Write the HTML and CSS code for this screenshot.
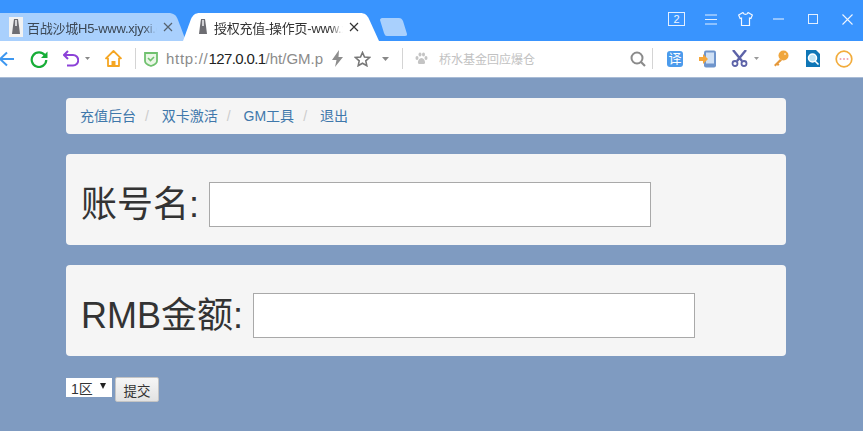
FILE: index.html
```html
<!DOCTYPE html>
<html lang="zh">
<head>
<meta charset="utf-8">
<title>授权充值-操作页</title>
<link rel="stylesheet" href="styles.css">
</head>
<body>
<header class="chrome">
  <div class="titlebar">
    <div class="tabs">
      <div class="tab tab-back">
        <svg class="tab-bg" width="186" height="28" viewBox="0 0 186 28"><path d="M0 0H168C174 0 176 2 178 7L186 28H0Z" fill="#a9d0fd"/></svg>
        <svg class="favicon" width="14" height="20" viewBox="0 0 14 20"><rect width="14" height="20" fill="#f2f2f2"/><path d="M5 2h4l1 7 1 8H3l1-8Z" fill="#6d6d72"/><path d="M6 3h2v6H6Z" fill="#d5d5d8"/></svg>
        <span class="tab-title">百战沙城H5-www.xjyxi.c</span>
        <svg class="tab-x" width="10" height="10" viewBox="0 0 10 10"><path d="M1 1l8 8M9 1l-8 8" stroke="#56636f" stroke-width="1.2"/></svg>
      </div>
      <div class="tab tab-front">
        <svg class="tab-bg" width="196" height="28" viewBox="0 0 196 28"><path d="M0 28L8 6C10 2 12 0 17 0H177C182 0 184 2 186 6L196 28Z" fill="#fff"/></svg>
        <svg class="favicon" width="14" height="20" viewBox="0 0 14 20"><path d="M5 2h4l1 7 1 8H3l1-8Z" fill="#6d6d72"/><path d="M6 3h2v6H6Z" fill="#cfcfd2"/></svg>
        <span class="tab-title">授权充值-操作页-www.x</span>
        <svg class="tab-x" width="10" height="10" viewBox="0 0 10 10"><path d="M1 1l8 8M9 1l-8 8" stroke="#333" stroke-width="1.2"/></svg>
      </div>
      <svg class="newtab" width="28" height="18" viewBox="0 0 28 18"><path d="M2 0H19C21 0 22 1 23 3L27 16C27 17 27 18 25 18H7C5 18 5 17 4 15L0 2C0 1 1 0 2 0Z" fill="#a9d0fd"/></svg>
    </div>
    <div class="winctl">
      <svg width="17" height="14" viewBox="0 0 17 14"><rect x=".5" y=".5" width="16" height="13" fill="none" stroke="#e3efff"/><text x="8.5" y="11" text-anchor="middle" class="count">2</text></svg>
      <svg class="ml-20" width="12" height="11" viewBox="0 0 12 11"><path d="M0 1h12M0 5.500h12M0 10h12" stroke="#e3efff"/></svg>
      <svg class="ml-21" width="15" height="14" viewBox="0 0 15 14"><path d="M5 .5L.6 3l1.500 3.500L3.500 6v7.500h8V6l1.400.5L14.400 3 10 .5C9.500 3 5.500 3 5 .5Z" fill="none" stroke="#f4f8ff" stroke-width="1.200"/></svg>
      <svg class="ml-20" width="11" height="2" viewBox="0 0 11 2"><path d="M0 1h11" stroke="#eef5ff"/></svg>
      <svg class="ml-24" width="10" height="10" viewBox="0 0 10 10"><rect x=".5" y=".5" width="9" height="9" fill="none" stroke="#e3efff"/></svg>
      <svg class="ml-24" width="11" height="11" viewBox="0 0 11 11"><path d="M.5.500l10 10M10.500.500l-10 10" stroke="#eef5ff" stroke-width="1.100"/></svg>
    </div>
  </div>
  <div class="toolbar">
    <svg class="tool-back" width="16" height="16" viewBox="0 0 16 16"><path d="M15 8H1M8 1.500L1 8l7 6.500" fill="none" stroke="#3d97f0" stroke-width="2"/></svg>
    <svg class="ml-15" width="18" height="18" viewBox="0 0 18 18"><path d="M15 5.500A7.300 7.300 0 1 0 16.300 10" fill="none" stroke="#17ad37" stroke-width="2.200"/><path d="M17.500 1.500V8H11Z" fill="#17ad37"/></svg>
    <svg class="ml-15" width="16" height="17" viewBox="0 0 16 17"><path d="M1 5h9a4.800 4.800 0 0 1 0 10.500H4" fill="none" stroke="#8c42d8" stroke-width="2"/><path d="M5 1L1 5l4 4" fill="none" stroke="#8c42d8" stroke-width="2"/></svg>
    <svg class="ml-6" width="5" height="3" viewBox="0 0 5 3"><path d="M0 0h5L2.500 3Z" fill="#888"/></svg>
    <svg class="ml-15" width="17" height="17" viewBox="0 0 17 17"><path d="M8.500 1L1 8.300h2V16h11V8.300h2Z" fill="none" stroke="#f5a623" stroke-width="1.800" stroke-linejoin="round"/><path d="M6.500 16v-5h4v5" fill="#f5a623"/></svg>
    <span class="vsep sep-a"></span>
    <svg class="shield" width="14" height="16" viewBox="0 0 14 16"><path d="M1 2h12v8c0 2.500-3 4-6 5-3-1-6-2.500-6-5Z" fill="#eaf7e6" stroke="#70c16f" stroke-width="1.800"/><path d="M4 7l2.500 2.500L10 6" fill="none" stroke="#70c16f" stroke-width="1.600"/></svg>
    <span class="url"><span class="url-dim url-scheme">http://</span><span class="url-host">127.0.0.1</span><span class="url-dim">/ht/GM.p</span></span>
    <svg class="bolt" width="13" height="17" viewBox="0 0 13 17"><path d="M8 0L1 10h4.500L4 17l8-10H7.500Z" fill="#8d8d8d"/></svg>
    <svg class="ml-10" width="17" height="16" viewBox="0 0 17 16"><path d="M8.500 1.500l2 4.500 5 .5-3.700 3.300 1 4.900-4.300-2.500-4.300 2.500 1-4.900L1.500 6.500l5-.5Z" fill="none" stroke="#777" stroke-width="1.600"/></svg>
    <svg class="ml-11" width="7" height="4" viewBox="0 0 7 4"><path d="M0 0h7L3.500 4Z" fill="#888"/></svg>
    <span class="vsep sep-b"></span>
    <svg class="paw" width="13" height="13" viewBox="0 0 13 13"><g fill="#c4c4c4"><ellipse cx="2" cy="6" rx="1.500" ry="2"/><ellipse cx="5" cy="2.500" rx="1.500" ry="2"/><ellipse cx="8.500" cy="2.500" rx="1.500" ry="2"/><ellipse cx="11" cy="6" rx="1.500" ry="2"/><path d="M6.500 6c2 0 4 3 3.500 5-.5 1.500-2.500 1-3.500 1s-3 .5-3.500-1C2.500 9 4.500 6 6.500 6Z"/></g></svg>
    <span class="search-hint">桥水基金回应爆仓</span>
    <svg class="search" width="16" height="16" viewBox="0 0 16 16"><circle cx="7" cy="7" r="5.500" fill="none" stroke="#8a8a8a" stroke-width="2"/><path d="M11 11l4 4" stroke="#8a8a8a" stroke-width="2.200"/></svg>
    <span class="vsep sep-c"></span>
    <span class="ico-translate">译</span>
    <svg class="ml-16" width="17" height="18" viewBox="0 0 17 18"><rect x="5" y="0.500" width="12" height="17" rx="2" fill="#6f95cc"/><rect x="7" y="2.500" width="8" height="11" fill="#cfe0f5"/><path d="M0 7h4V4l5 5-5 5v-3H0Z" fill="#f5a63a"/></svg>
    <svg class="ml-15" width="17" height="17" viewBox="0 0 17 17"><path d="M2 0l9 11M15 0L6 11" stroke="#5d63a8" stroke-width="2.400"/><circle cx="4" cy="13.500" r="2.500" fill="none" stroke="#5d63a8" stroke-width="1.800"/><circle cx="13" cy="13.500" r="2.500" fill="none" stroke="#5d63a8" stroke-width="1.800"/></svg>
    <svg class="ml-6" width="5" height="3" viewBox="0 0 5 3"><path d="M0 0h5L2.500 3Z" fill="#999"/></svg>
    <svg class="ml-14" width="16" height="17" viewBox="0 0 16 17"><circle cx="10.500" cy="5.500" r="5" fill="#f0a63c"/><path d="M7 9L1 15l1.500 1.500L4 15l1 1 1.500-1.500L5.500 13.500 9 10.500Z" fill="#e5983a"/><circle cx="12" cy="4" r="1" fill="#fbe2b8"/></svg>
    <svg class="ml-16" width="15" height="17" viewBox="0 0 15 17"><path d="M1 0h10l4 4v13H1Z" fill="#0f76b6"/><circle cx="7.500" cy="8" r="4" fill="#bfe4f5" stroke="#fff" stroke-width="1.500"/><path d="M10 11l3.500 3.500" stroke="#fff" stroke-width="1.600"/></svg>
    <svg class="ml-15" width="18" height="18" viewBox="0 0 18 18"><circle cx="9" cy="9" r="7.800" fill="#fff" stroke="#f2ac3c" stroke-width="1.700"/><g fill="#f0a0b0"><circle cx="5.500" cy="9" r="1"/><circle cx="9" cy="9" r="1"/><circle cx="12.500" cy="9" r="1"/></g></svg>
  </div>
</header>
<main class="page">
  <nav class="crumbs">
    <a href="#">充值后台</a><span class="slash">/</span>
    <a href="#">双卡激活</a><span class="slash">/</span>
    <a href="#">GM工具</a><span class="slash">/</span>
    <a href="#">退出</a>
  </nav>
  <div class="well">
    <label class="field-label" for="account">账号名:</label>
    <input class="field-input" id="account" type="text">
  </div>
  <div class="well">
    <label class="field-label" for="amount">RMB金额:</label>
    <input class="field-input" id="amount" type="text">
  </div>
  <div class="actions">
    <span class="zone"><span class="zone-text">1区</span><span class="zone-arrow"></span></span>
    <button class="submit" type="button">提交</button>
  </div>
</main>
</body>
</html>
```

FILE: styles.css
```css
* { box-sizing: border-box; }
html, body { margin: 0; padding: 0; height: 100%; overflow: hidden; }
body {
  background: #7f9bc1;
  font-family: "Liberation Sans", "Noto Sans CJK SC", sans-serif;
  color: #333;
}
svg { display: block; flex: none; }

.chrome { height: 78px; }
.titlebar {
  height: 41px;
  background: #3994fe;
  display: flex;
  justify-content: space-between;
  align-items: flex-start;
}
.tabs { display: flex; align-items: flex-start; padding-top: 13px; height: 41px; }
.tab {
  position: relative;
  height: 28px;
  display: flex;
  align-items: center;
  font-size: 13px;
}
.tab-bg { position: absolute; left: 0; top: 0; }
.tab-back { width: 183px; padding-left: 9px; color: #3b4754; }
.tab-front { width: 196px; padding-left: 13px; color: #333; }
.tab .favicon, .tab .tab-title, .tab .tab-x { position: relative; }
.tab-title {
  display: block;
  overflow: hidden;
  white-space: nowrap;
  margin-left: 4px;
  width: 130px;
  letter-spacing: -0.25px;
  -webkit-mask-image: linear-gradient(90deg, #000 90%, transparent);
  mask-image: linear-gradient(90deg, #000 90%, transparent);
}
.tab-x { margin-left: 6px; }
.tab-front .tab-title { width: 129px; }
.newtab { margin: 5px 0 0 1px; }

.winctl {
  display: flex;
  align-items: center;
  height: 38px;
  padding-right: 10px;
}
.count { font: 11px "Liberation Sans", sans-serif; fill: #eef5ff; }
.ml-6 { margin-left: 6px; }
.ml-10 { margin-left: 10px; }
.ml-11 { margin-left: 11px; }
.ml-14 { margin-left: 14px; }
.ml-15 { margin-left: 15px; }
.ml-16 { margin-left: 16px; }
.ml-20 { margin-left: 20px; }
.ml-21 { margin-left: 21px; }
.ml-24 { margin-left: 24px; }

.toolbar {
  height: 37px;
  background: #fff;
  border-bottom: 1px solid #a9bcd6;
  display: flex;
  align-items: center;
  padding-bottom: 1px;
}
.tool-back { margin-left: -1px; }
.vsep { width: 1px; height: 21px; background: #d4d4d4; flex: none; }
.sep-a { margin-left: 13px; }
.sep-b { margin-left: 13px; }
.sep-c { margin-left: 6px; }
.shield { margin-left: 8px; }
.url {
  margin-left: 8px;
  width: 161px;
  overflow: hidden;
  white-space: nowrap;
  font-size: 15px;
  color: #222;
}
.url-dim { color: #8b8b8b; }
.url-scheme { letter-spacing: 0.7px; }
.url-host { letter-spacing: -0.6px; }
.bolt { margin-left: 4px; }
.paw { margin-left: 12px; }
.search-hint {
  margin-left: 11px;
  width: 100px;
  font-size: 12px;
  color: #c2c2c2;
  white-space: nowrap;
}
.search { margin-left: 91px; }
.ico-translate {
  margin-left: 14px;
  width: 16px;
  height: 16px;
  border-radius: 3px;
  background: #4b9bec;
  color: #fff;
  font-size: 13px;
  line-height: 16px;
  text-align: center;
  flex: none;
}

.page { width: 720px; margin-left: 66px; padding-top: 20px; }
.crumbs {
  height: 36px;
  background: #f5f5f5;
  border-radius: 4px;
  padding: 0 14px;
  margin-bottom: 20px;
  font-size: 14px;
  line-height: 36px;
  white-space: nowrap;
}
.crumbs a { color: #3f78ab; text-decoration: none; }
.slash { color: #ccc; padding: 0 9px 0 9px; }
.well {
  height: 91px;
  background: #f5f5f5;
  border-radius: 4px;
  padding: 28px 15px 0;
  margin-bottom: 20px;
  display: flex;
  align-items: flex-start;
}
.field-label {
  font-size: 36px;
  line-height: 45px;
  height: 45px;
  color: #333;
  white-space: nowrap;
  margin-right: 10px;
}
.field-input {
  width: 442px;
  height: 45px;
  background: #fff;
  border: 1px solid #a9a9a9;
  padding: 0;
  margin: 0;
  display: block;
}
.actions { display: flex; align-items: flex-start; margin-top: 21px; }
.zone {
  width: 46px;
  height: 19px;
  margin-top: 1px;
  background: #fff;
  display: flex;
  align-items: center;
  font-size: 14px;
  color: #333;
  padding-left: 5px;
  position: relative;
}
.zone-arrow {
  position: absolute;
  right: 6px;
  top: 5px;
  border-left: 3.500px solid transparent;
  border-right: 3.500px solid transparent;
  border-top: 6px solid #222;
}
.submit {
  margin: 0 0 0 3px;
  width: 44px;
  height: 25px;
  padding: 0;
  border: 1px solid #c4c4c4;
  border-radius: 2px;
  background: linear-gradient(#f6f6f6, #e2e2e2);
  font: 13.500px "Liberation Sans", "Noto Sans CJK SC", sans-serif;
  color: #333;
}
```
